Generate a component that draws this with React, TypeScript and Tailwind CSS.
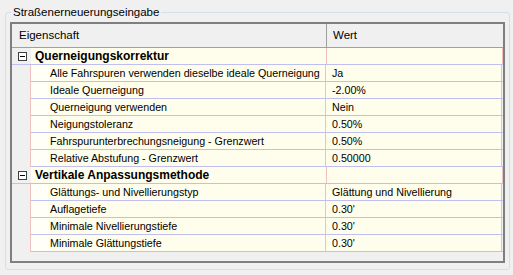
import React from "react";

type Row = { group?: boolean; label: string; value?: string };

const rows: Row[] = [
  { group: true, label: "Querneigungskorrektur" },
  { label: "Alle Fahrspuren verwenden dieselbe ideale Querneigung", value: "Ja" },
  { label: "Ideale Querneigung", value: "-2.00%" },
  { label: "Querneigung verwenden", value: "Nein" },
  { label: "Neigungstoleranz", value: "0.50%" },
  { label: "Fahrspurunterbrechungsneigung - Grenzwert", value: "0.50%" },
  { label: "Relative Abstufung - Grenzwert", value: "0.50000" },
  { group: true, label: "Vertikale Anpassungsmethode" },
  { label: "Glättungs- und Nivellierungstyp", value: "Glättung und Nivellierung" },
  { label: "Auflagetiefe", value: "0.30'" },
  { label: "Minimale Nivellierungstiefe", value: "0.30'" },
  { label: "Minimale Glättungstiefe", value: "0.30'" },
];

function Minus() {
  return (
    <svg width="9" height="9" viewBox="0 0 9 9" className="block">
      <rect x="0.5" y="0.5" width="8" height="8" fill="#fff" stroke="#404040" />
      <line x1="2" y1="4.5" x2="7" y2="4.5" stroke="#000" />
    </svg>
  );
}

export default function App() {
  return (
    <div
      className="w-[513px] h-[275px] bg-[#f0f0f0] pt-[12px] pl-[5px] text-[10.7px] text-black"
      style={{ fontFamily: "'Liberation Sans', Arial, sans-serif" }}
    >
      <div className="relative w-[505px] h-[258px] border border-[#d5dfe5] rounded-[3px]">
        <div className="absolute left-[5px] top-[-8px] bg-[#f0f0f0] px-[2px] leading-[14px] text-[11.5px]">
          Straßenerneuerungseingabe
        </div>
        <div className="ml-[4px] mt-[9px] w-[495px] h-[241px] border-2 border-[#7f7f7f] bg-[#f0f0f0] flex flex-col">
          <div className="flex h-[24px] shrink-0 border-b border-[#a0a0a0] bg-[#f0f0f0] text-[11.5px]">
            <div className="w-[315px] pl-[7px] flex items-center border-r border-[#a0a0a0]">Eigenschaft</div>
            <div className="flex-1 pl-[6px] flex items-center">Wert</div>
          </div>
          <div className="flex flex-col">
            {rows.map((r, i) =>
              r.group ? (
                <div key={i} className="flex h-[17px] border-b border-[#c0c0f0]">
                  <div className="w-[19px] flex items-center justify-center bg-[#f0f0f0] pl-[2px]">
                    <Minus />
                  </div>
                  <div className="w-[296px] bg-[#fffeec] pl-[4px] flex items-center font-bold text-[12px] border-r border-[#f0c0c0]">
                    {r.label}
                  </div>
                  <div className="w-[176px] bg-[#fffeec] border-r border-[#f0c0c0]"></div>
                </div>
              ) : (
                <div key={i} className="flex h-[17px]">
                  <div className="w-[19px] bg-[#f0f0f0] border-r border-[#f0c0c0]"></div>
                  <div className="flex flex-1 border-b border-[#c0c0f0]">
                    <div className="w-[17px] bg-[#fffff8]"></div>
                    <div className="w-[278px] bg-[#fffeec] pl-[2px] flex items-center border-r border-[#f0c0c0] whitespace-nowrap">
                      {r.label}
                    </div>
                    <div className="w-[176px] bg-[#fffeec] pl-[6px] flex items-center border-r border-[#f0c0c0]">
                      {r.value}
                    </div>
                  </div>
                </div>
              )
            )}
          </div>
        </div>
      </div>
    </div>
  );
}
